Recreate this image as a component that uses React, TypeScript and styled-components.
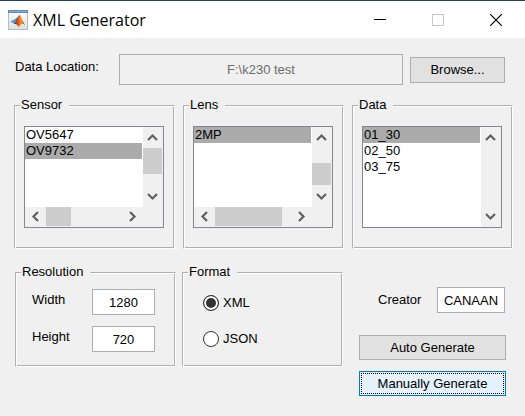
import React, { useState } from "react";
import styled, { createGlobalStyle, css } from "styled-components";

const GlobalStyle = createGlobalStyle`
  *, *::before, *::after { box-sizing: border-box; }
  body {
    margin: 0;
    background: #f0f0f0;
    color: #000;
    font: 13px/16px "Liberation Sans", Arial, sans-serif;
  }
  button, input, select { font: inherit; color: inherit; border-radius: 0; }
`;

const TitleBar = styled.header`
  display: flex;
  align-items: center;
  height: 38px;
  padding-left: 8px;
  background: #fff;
  border-top: 1px solid #1b4468;
`;

const Title = styled.h1`
  flex: 1;
  margin: 0 0 0 5px;
  font: 400 16px/24px "Open Sans", "Noto Sans", sans-serif;
`;

const CaptionButton = styled.button`
  display: grid;
  place-items: center;
  width: 58px;
  height: 36px;
  padding: 0;
  border: 0;
  background: none;
`;

const LocationRow = styled.div`
  display: flex;
  align-items: center;
  padding: 16px 20px 0 15px;
`;

const FieldLabel = styled.label<{ $tall?: boolean }>`
  align-self: flex-start;
  line-height: ${(p) => (p.$tall ? 26 : 22)}px;
`;

const LocationLabel = styled(FieldLabel)`
  width: 104px;
`;

const TextBox = styled.input<{ $width?: number }>`
  width: ${(p) => (p.$width ? `${p.$width}px` : "auto")};
  height: 26px;
  padding: 0;
  border: 1px solid #abadb3;
  background: #fff;
  text-align: center;
  outline: 0;
`;

const LocationBox = styled(TextBox)`
  flex: 1;
  min-width: 0;
  height: 31px;
  margin-right: 7px;
  background: #f0f0f0;
  color: #6d6d6d;
`;

const PushButton = styled.button<{ $active?: boolean }>`
  height: 25px;
  padding: 0;
  border: 1px solid #adadad;
  background: #e1e1e1;
  ${(p) =>
    p.$active &&
    css`
      border-color: #0078d7;
      background: #e5f1fb;
      outline: 1px dotted #000;
      outline-offset: -3px;
    `}
`;

const BrowseButton = styled(PushButton)`
  width: 95px;
  height: 26px;
`;

const ListRow = styled.div`
  display: grid;
  grid-template-columns: repeat(3, 1fr);
  gap: 8px;
  padding: 12px 12px 0 14px;
`;

const OptionRow = styled.div`
  display: grid;
  grid-template-columns: repeat(3, 1fr);
  align-items: start;
  gap: 6px;
  padding: 15px 15px 0 15px;
`;

const Panel = styled.fieldset`
  min-width: 0;
  margin: 0;
  padding: 0;
  border: 1px solid;
  border-color: #b0b0b0 #fff #fff #b0b0b0;
  box-shadow: inset 1px 1px #fff, inset -1px -1px #b0b0b0;
`;

const Legend = styled.legend`
  margin-left: 5px;
  padding: 0 7px 0 1px;
  background: #f0f0f0;
`;

const ListBody = styled.div`
  padding: 13px 10px 20px 9px;
`;

const ListFrame = styled.div<{ $horizontal: boolean }>`
  display: grid;
  grid-template-columns: 1fr 20px;
  grid-template-rows: ${(p) => (p.$horizontal ? "1fr 20px" : "1fr")};
  height: 102px;
  border: 1px solid #828790;
  background: #f0f0f0;
`;

const List = styled.select`
  appearance: none;
  width: 100%;
  height: 100%;
  min-width: 0;
  padding: 0;
  border: 0;
  border-right: 1px solid #fff;
  outline: 0;
  background: #fff;
  overflow: hidden;
  scrollbar-width: none;

  option {
    min-height: 16px;
    padding: 0 1px;
    line-height: 16px;
    color: #000;
  }

  option:checked {
    background: #ababab linear-gradient(#ababab, #ababab);
    color: #000;
  }
`;

const Bar = styled.div<{ $axis: "x" | "y" }>`
  display: grid;
  ${(p) =>
    p.$axis === "y"
      ? css`
          grid-template-rows: 21px 1fr 21px;
          padding-right: 1px;
        `
      : css`
          grid-template-columns: 21px 1fr 21px;
          padding-bottom: 1px;
        `}
`;

const Track = styled.div<{ $axis: "x" | "y"; $start: number; $size: number }>`
  display: grid;
  ${(p) => {
    const sizes = `${p.$start}fr ${p.$size}fr ${100 - p.$start - p.$size}fr`;
    return p.$axis === "y"
      ? css`
          grid-template-rows: ${sizes};
        `
      : css`
          grid-template-columns: ${sizes};
        `;
  }}
`;

const Thumb = styled.div<{ $axis: "x" | "y" }>`
  background: #cdcdcd;
  ${(p) => (p.$axis === "y" ? "grid-row: 2;" : "grid-column: 2;")}
`;

const ArrowButton = styled.button`
  display: grid;
  place-items: center;
  padding: 0;
  border: 0;
  background: none;
`;

const ResolutionBody = styled.div`
  padding: 9px 20px 14px 16px;
`;

const FieldRow = styled.div`
  display: flex;
  justify-content: space-between;
  align-items: center;

  & + & { margin-top: 11px; }
`;

const FormatBody = styled.div`
  padding: 15px 20px 19px;
`;

const RadioLabel = styled.label`
  display: flex;
  align-items: center;
  gap: 4px;

  & + & { margin-top: 20px; }
`;

const Radio = styled.input`
  appearance: none;
  width: 16px;
  height: 16px;
  margin: 0;
  border: 1px solid #333;
  border-radius: 50%;
  background: #fff;

  &:checked {
    background: #333;
    box-shadow: inset 0 0 0 2px #fff;
  }
`;

const Actions = styled.div`
  display: flex;
  flex-direction: column;
  padding: 23px 4px 0 10px;
`;

const CreatorRow = styled.div`
  display: flex;
  justify-content: space-between;
  align-items: center;
  margin-bottom: 22px;
  padding: 0 1px 0 19px;
`;

const ActionButton = styled(PushButton)`
  & + & { margin-top: 11px; }
`;

type Direction = "up" | "down" | "left" | "right";

const arrowPaths: Record<Direction, string> = {
  up: "M1 8 5.500 3.500 10 8",
  down: "M1 3 5.500 7.500 10 3",
  left: "M8 1 3.500 5.500 8 10",
  right: "M3 1 7.500 5.500 3 10",
};

function Arrow({ direction }: { direction: Direction }) {
  return (
    <ArrowButton type="button" tabIndex={-1} aria-label={`Scroll ${direction}`}>
      <svg width="11" height="11" viewBox="0 0 11 11" fill="none" stroke="#606060" strokeWidth="2.200">
        <path d={arrowPaths[direction]} />
      </svg>
    </ArrowButton>
  );
}

interface ThumbRange {
  start: number;
  size: number;
}

function ScrollBar({ axis, thumb }: { axis: "x" | "y"; thumb?: ThumbRange }) {
  return (
    <Bar $axis={axis}>
      <Arrow direction={axis === "y" ? "up" : "left"} />
      <Track $axis={axis} $start={thumb?.start ?? 0} $size={thumb?.size ?? 0}>
        {thumb && <Thumb $axis={axis} />}
      </Track>
      <Arrow direction={axis === "y" ? "down" : "right"} />
    </Bar>
  );
}

interface ListBoxProps {
  title: string;
  items: string[];
  initial: string;
  vertical?: ThumbRange;
  horizontal?: ThumbRange;
}

function ListBox({ title, items, initial, vertical, horizontal }: ListBoxProps) {
  const [value, setValue] = useState(initial);
  return (
    <Panel>
      <Legend>{title}</Legend>
      <ListBody>
        <ListFrame $horizontal={Boolean(horizontal)}>
          <List size={5} aria-label={title} value={value} onChange={(e) => setValue(e.target.value)}>
            {items.map((item) => (
              <option key={item} value={item}>
                {item}
              </option>
            ))}
          </List>
          <ScrollBar axis="y" thumb={vertical} />
          {horizontal && <ScrollBar axis="x" thumb={horizontal} />}
        </ListFrame>
      </ListBody>
    </Panel>
  );
}

function AppIcon() {
  return (
    <svg width="20" height="20" viewBox="0 0 20 20" aria-hidden="true">
      <defs>
        <linearGradient id="face" x1="0" y1="0" x2="0" y2="1">
          <stop offset="0" stopColor="#fff" />
          <stop offset="1" stopColor="#dcdfe3" />
        </linearGradient>
        <linearGradient id="peak" x1="0" y1="0" x2="1" y2="0">
          <stop offset="0" stopColor="#7a1d12" />
          <stop offset="0.450" stopColor="#e8641b" />
          <stop offset="0.650" stopColor="#f39a2d" />
          <stop offset="1" stopColor="#a82a12" />
        </linearGradient>
      </defs>
      <rect x="0.500" y="0.500" width="19" height="19" fill="url(#face)" stroke="#b4b9bf" />
      <path d="M0 0h20v3H0z" fill="#5f8db8" />
      <path d="M1 1h18v1H1z" fill="#86add0" />
      <path d="M2.500 11.500 7 9.300l2-1.200L11.500 4.800 9.500 12 7 14z" fill="#2f6fae" />
      <path d="M2.500 11.500 7 9.300 8.500 11 6 13.500z" fill="#5ba3d0" />
      <path d="M6 13.500C8 13 9.500 8 11.800 4.500c1.700 2.500 2.700 7 5.200 10.500-2-1.500-3.200-1.500-4.200-.3L10.500 17c-.8-1.800-2-3.300-4.500-3.500z" fill="url(#peak)" />
    </svg>
  );
}

export default function App() {
  const [format, setFormat] = useState("XML");
  return (
    <>
      <GlobalStyle />
      <TitleBar>
        <AppIcon />
        <Title>XML Generator</Title>
        <CaptionButton type="button" aria-label="Minimize">
          <svg width="12" height="12" viewBox="0 0 12 12">
            <path d="M0 5h12v1H0z" fill="#000" />
          </svg>
        </CaptionButton>
        <CaptionButton type="button" aria-label="Maximize" disabled>
          <svg width="12" height="12" viewBox="0 0 12 12">
            <rect x="0.500" y="0.500" width="11" height="11" fill="none" stroke="#c8c8c8" />
          </svg>
        </CaptionButton>
        <CaptionButton type="button" aria-label="Close">
          <svg width="12" height="12" viewBox="0 0 12 12">
            <path d="M0 0 12 12M12 0 0 12" stroke="#000" strokeWidth="1.200" />
          </svg>
        </CaptionButton>
      </TitleBar>
      <main>
        <LocationRow>
          <LocationLabel $tall htmlFor="location">
            Data Location:
          </LocationLabel>
          <LocationBox id="location" defaultValue={"F:\\k230 test"} readOnly />
          <BrowseButton type="button">Browse...</BrowseButton>
        </LocationRow>
        <ListRow>
          <ListBox
            title="Sensor"
            items={["OV5647", "OV9732"]}
            initial="OV9732"
            vertical={{ start: 0, size: 68 }}
            horizontal={{ start: 0, size: 33 }}
          />
          <ListBox
            title="Lens"
            items={["2MP"]}
            initial="2MP"
            vertical={{ start: 40, size: 58 }}
            horizontal={{ start: 0, size: 88 }}
          />
          <ListBox title="Data" items={["01_30", "02_50", "03_75"]} initial="01_30" />
        </ListRow>
        <OptionRow>
          <Panel>
            <Legend>Resolution</Legend>
            <ResolutionBody>
              <FieldRow>
                <FieldLabel htmlFor="width">Width</FieldLabel>
                <TextBox id="width" $width={63} defaultValue="1280" />
              </FieldRow>
              <FieldRow>
                <FieldLabel htmlFor="height">Height</FieldLabel>
                <TextBox id="height" $width={63} defaultValue="720" />
              </FieldRow>
            </ResolutionBody>
          </Panel>
          <Panel>
            <Legend>Format</Legend>
            <FormatBody>
              {["XML", "JSON"].map((name) => (
                <RadioLabel key={name}>
                  <Radio type="radio" name="format" checked={format === name} onChange={() => setFormat(name)} />
                  {name}
                </RadioLabel>
              ))}
            </FormatBody>
          </Panel>
          <Actions>
            <CreatorRow>
              <label htmlFor="creator">Creator</label>
              <TextBox id="creator" $width={68} defaultValue="CANAAN" />
            </CreatorRow>
            <ActionButton type="button">Auto Generate</ActionButton>
            <ActionButton type="button" $active>
              Manually Generate
            </ActionButton>
          </Actions>
        </OptionRow>
      </main>
    </>
  );
}
